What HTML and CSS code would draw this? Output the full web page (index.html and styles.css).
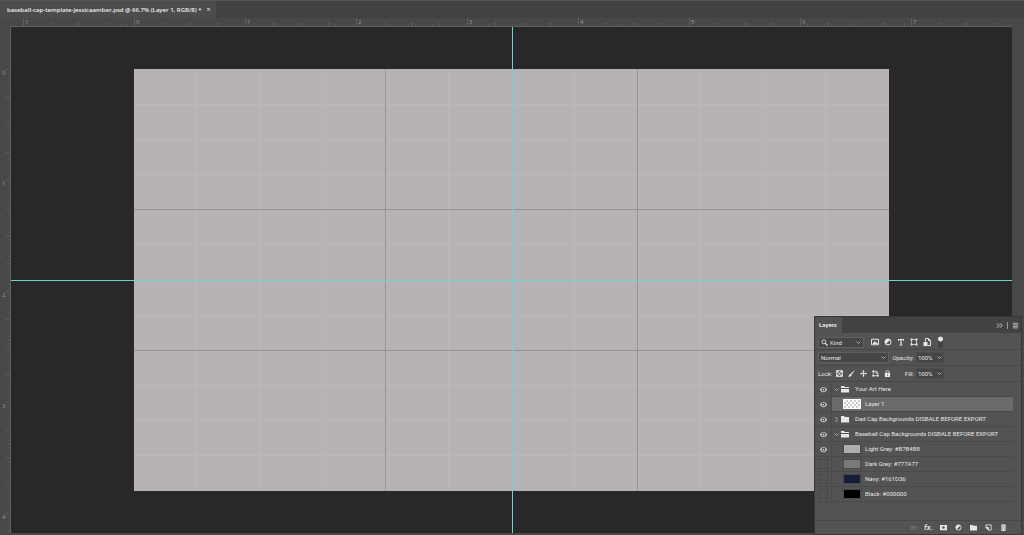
FILE: index.html
```html
<!DOCTYPE html>
<html lang="en">
    <head>
        <meta charset="UTF-8">
        <meta name="viewport" content="width=device-width, initial-scale=1.0">
        <title>baseball-cap-template-jessicaamber.psd</title>
        <link rel="stylesheet" href="styles.css">
    </head>
    <body>
        <!-- icons -->
        <svg class="sprite" aria-hidden="true">
            <symbol id="chevron" viewBox="0 0 10 10"><path d="M1 3l4 4 4-4" fill="none" stroke="currentColor" stroke-width="2"/></symbol>
            <symbol id="chevron-right" viewBox="0 0 10 10"><path d="M3 0l4 5-4 5" fill="none" stroke="currentColor" stroke-width="2"/></symbol>
            <symbol id="eye" viewBox="0 0 16 16"><path d="M0 8C4 0 12 0 16 8 12 16 4 16 0 8Z" fill="currentColor"/><circle cx="8" cy="8" r="4.500" fill="#444"/><circle cx="8" cy="8" r="2" fill="currentColor"/></symbol>
            <symbol id="folder" viewBox="0 0 16 16"><path d="M0 2h6l1.500 2H16v11H0z" fill="currentColor"/></symbol>
            <symbol id="folder-open" viewBox="0 0 16 16"><path d="M0 2h6l1.500 2H16v2H0zM0 8h16v7H0z" fill="currentColor"/></symbol>
            <symbol id="search" viewBox="0 0 16 16"><circle cx="6.500" cy="6.500" r="4.500" fill="none" stroke="currentColor" stroke-width="2"/><path d="m10 10 5 5" stroke="currentColor" stroke-width="3"/></symbol>
            <symbol id="image" viewBox="0 0 16 16"><path d="M1 2.500h14v11H1z" fill="none" stroke="currentColor" stroke-width="2"/><path d="m3 12 4-6 3 3.500 1.500-1.500 2 4z" fill="currentColor"/></symbol>
            <symbol id="adjust" viewBox="0 0 16 16"><circle cx="8" cy="8" r="6" fill="none" stroke="currentColor" stroke-width="2"/><path d="M12.300 3.700A6 6 0 0 0 3.700 12.300Z" fill="currentColor"/></symbol>
            <symbol id="type" viewBox="0 0 16 16"><path d="M2 2h12v4h-1.500L12 4H9.300v9l1.700.500V15H5v-1.500l1.700-.500V4H4l-.500 2H2z" fill="currentColor"/></symbol>
            <symbol id="shape" viewBox="0 0 16 16"><path d="M3 3h10v10H3z" fill="none" stroke="currentColor" stroke-width="1.500"/><path d="M1 1h4v4H1zM11 1h4v4h-4zM1 11h4v4H1zM11 11h4v4h-4z" fill="currentColor"/></symbol>
            <symbol id="smart" viewBox="0 0 16 16"><path d="M5 7V1h6l4 4v10H9" fill="none" stroke="currentColor" stroke-width="2"/><path d="M1 8h8v8H1zM10 1v5h5z" fill="currentColor"/></symbol>
            <symbol id="pixels" viewBox="0 0 16 16"><path d="M1 1h14v14H1z" fill="none" stroke="currentColor" stroke-width="2"/><path d="M2 2h4v4H2zM10 2h4v4h-4zM6 6h4v4H6zM2 10h4v4H2zM10 10h4v4h-4z" fill="currentColor"/></symbol>
            <symbol id="brush" viewBox="0 0 16 16"><path d="M16 0 6.500 7.500 9 10zM6 8.500C3 8.500 4 12 0 14.500c3.500 2 9 .500 8.500-3.500z" fill="currentColor"/></symbol>
            <symbol id="move" viewBox="0 0 16 16"><path d="M8 2v12M2 8h12" stroke="currentColor" stroke-width="2"/><path d="m8 0 3 3.500H5zM8 16l3-3.500H5zM0 8l3.500-3v6zM16 8l-3.500-3v6z" fill="currentColor"/></symbol>
            <symbol id="artboard" viewBox="0 0 16 16"><path d="M3 0v16M0 3h10l5 4M0 13h16M13 8v8" fill="none" stroke="currentColor" stroke-width="2"/><path d="M7 5h5v5z" fill="currentColor"/></symbol>
            <symbol id="lock" viewBox="0 0 16 16"><path d="M4.500 8V5a3.500 3.500 0 0 1 7 0v3" fill="none" stroke="currentColor" stroke-width="2"/><path d="M2 7h12v9H2zm5 3v3h2v-3z" fill="currentColor" fill-rule="evenodd"/></symbol>
            <symbol id="link" viewBox="0 0 16 16"><path d="M7 5H4a3 3 0 0 0 0 6h3M9 5h3a3 3 0 0 1 0 6H9M5 8h6" fill="none" stroke="currentColor" stroke-width="1.500"/></symbol>
            <symbol id="mask" viewBox="0 0 16 16"><path d="M0 2h16v12H0zm8 3a3 3 0 1 0 0 6 3 3 0 0 0 0-6z" fill="currentColor" fill-rule="evenodd"/></symbol>
            <symbol id="new" viewBox="0 0 16 16"><path d="M2 2h12v12H8V8H2z" fill="none" stroke="currentColor" stroke-width="2"/><path d="M1 8h7v7z" fill="currentColor"/></symbol>
            <symbol id="trash" viewBox="0 0 16 16"><path d="M2 3h12M6 2V1h4v1" fill="none" stroke="currentColor" stroke-width="2"/><path d="M3 5h10l-.500 11h-9z" fill="currentColor"/><path d="M6 7v7M10 7v7" stroke="#666"/></symbol>
            <symbol id="collapse" viewBox="0 0 16 16"><path d="m2 3 5 5-5 5M9 3l5 5-5 5" fill="none" stroke="currentColor" stroke-width="2"/></symbol>
            <symbol id="menu" viewBox="0 0 16 16"><path d="M2 3h12M2 6.500h12M2 10h12M2 13.500h12" stroke="currentColor" stroke-width="1.500"/></symbol>
        </svg>

        <header class="tabs">
            <div class="tab">
                <span>baseball-cap-template-jessicaamber.psd @ 66.7% (Layer 1, RGB/8) *</span>
                <button class="close" aria-label="Close">×</button>
            </div>
        </header>

        <main class="workspace">
            <div class="corner"></div>
            <div class="ruler ruler-x">
                <span>1</span><span>0</span><span>1</span><span>2</span><span>3</span><span>4</span><span>5</span><span>6</span><span>7</span>
            </div>
            <div class="corner"></div>
            <div class="ruler ruler-y">
                <span>0</span><span>1</span><span>2</span><span>3</span><span>4</span>
            </div>
            <div class="canvas">
                <svg class="document" aria-label="Document">
                    <g class="minor">
                        <line x1="8.333%" x2="8.333%" y2="100%"/><line x1="16.667%" x2="16.667%" y2="100%"/><line x1="25%" x2="25%" y2="100%"/>
                        <line x1="41.667%" x2="41.667%" y2="100%"/><line x1="58.333%" x2="58.333%" y2="100%"/>
                        <line x1="75%" x2="75%" y2="100%"/><line x1="83.333%" x2="83.333%" y2="100%"/><line x1="91.667%" x2="91.667%" y2="100%"/>
                        <line y1="8.333%" y2="8.333%" x2="100%"/><line y1="16.667%" y2="16.667%" x2="100%"/><line y1="25%" y2="25%" x2="100%"/>
                        <line y1="41.667%" y2="41.667%" x2="100%"/><line y1="58.333%" y2="58.333%" x2="100%"/>
                        <line y1="75%" y2="75%" x2="100%"/><line y1="83.333%" y2="83.333%" x2="100%"/><line y1="91.667%" y2="91.667%" x2="100%"/>
                    </g>
                    <g class="major">
                        <line x1="33.333%" x2="33.333%" y2="100%"/><line x1="66.667%" x2="66.667%" y2="100%"/>
                        <line y1="33.333%" y2="33.333%" x2="100%"/><line y1="66.667%" y2="66.667%" x2="100%"/>
                    </g>
                </svg>
                <div class="guide guide-x"></div>
                <div class="guide guide-y"></div>
            </div>
            <div class="scroll"></div>
        </main>

        <aside class="panel">
            <div class="panel-head">
                <h2>Layers</h2>
                <button class="icon" aria-label="Collapse"><svg><use href="#collapse"/></svg></button>
                <i class="split"></i>
                <button class="icon" aria-label="Panel menu"><svg><use href="#menu"/></svg></button>
            </div>
            <div class="tools">
                <div class="field kind">
                    <svg><use href="#search"/></svg>
                    <select aria-label="Filter"><option>Kind</option></select>
                    <svg class="arrow"><use href="#chevron"/></svg>
                </div>
                <div class="icons filters">
                    <button class="icon" aria-label="Pixel layers"><svg><use href="#image"/></svg></button>
                    <button class="icon" aria-label="Adjustment layers"><svg><use href="#adjust"/></svg></button>
                    <button class="icon" aria-label="Type layers"><svg><use href="#type"/></svg></button>
                    <button class="icon" aria-label="Shape layers"><svg><use href="#shape"/></svg></button>
                    <button class="icon" aria-label="Smart objects"><svg><use href="#smart"/></svg></button>
                    <button class="toggle" aria-label="Toggle filter"></button>
                </div>
            </div>
            <div class="tools">
                <div class="field blend">
                    <select aria-label="Blend mode"><option>Normal</option></select>
                    <svg class="arrow"><use href="#chevron"/></svg>
                </div>
                <label class="end" for="opacity">Opacity:</label>
                <div class="field amount">
                    <input type="text" id="opacity" value="100%">
                    <svg class="arrow"><use href="#chevron"/></svg>
                </div>
            </div>
            <div class="tools">
                <span class="lock-label">Lock:</span>
                <div class="icons locks">
                    <button class="icon" aria-label="Lock transparent pixels"><svg><use href="#pixels"/></svg></button>
                    <button class="icon" aria-label="Lock image pixels"><svg><use href="#brush"/></svg></button>
                    <button class="icon" aria-label="Lock position"><svg><use href="#move"/></svg></button>
                    <button class="icon" aria-label="Lock artboard"><svg><use href="#artboard"/></svg></button>
                    <button class="icon" aria-label="Lock all"><svg><use href="#lock"/></svg></button>
                </div>
                <label class="end" for="fill">Fill:</label>
                <div class="field amount">
                    <input type="text" id="fill" value="100%">
                    <svg class="arrow"><use href="#chevron"/></svg>
                </div>
            </div>
            <ul class="layers">
                <li>
                    <button class="eye" aria-label="Visibility"><svg><use href="#eye"/></svg></button>
                    <div class="layer group"><svg class="arrow"><use href="#chevron"/></svg><svg class="folder"><use href="#folder-open"/></svg><span>Your Art Here</span></div>
                </li>
                <li>
                    <button class="eye" aria-label="Visibility"><svg><use href="#eye"/></svg></button>
                    <div class="layer selected"><i class="thumb checker"></i><span>Layer 1</span></div>
                </li>
                <li>
                    <button class="eye" aria-label="Visibility"><svg><use href="#eye"/></svg></button>
                    <div class="layer group"><svg class="arrow"><use href="#chevron-right"/></svg><svg class="folder"><use href="#folder"/></svg><span>Dad Cap Backgrounds DISBALE BEFORE EXPORT</span></div>
                </li>
                <li>
                    <button class="eye" aria-label="Visibility"><svg><use href="#eye"/></svg></button>
                    <div class="layer group"><svg class="arrow"><use href="#chevron"/></svg><svg class="folder"><use href="#folder-open"/></svg><span>Baseball Cap Backgrounds DISBALE BEFORE EXPORT</span></div>
                </li>
                <li>
                    <button class="eye" aria-label="Visibility"><svg><use href="#eye"/></svg></button>
                    <div class="layer"><i class="thumb light"></i><span>Light Grey: #B7B4B8</span></div>
                </li>
                <li>
                    <button class="eye off" aria-label="Visibility"></button>
                    <div class="layer"><i class="thumb dark"></i><span>Dark Grey: #777A77</span></div>
                </li>
                <li>
                    <button class="eye off" aria-label="Visibility"></button>
                    <div class="layer"><i class="thumb navy"></i><span>Navy: #161D36</span></div>
                </li>
                <li>
                    <button class="eye off" aria-label="Visibility"></button>
                    <div class="layer"><i class="thumb black"></i><span>Black: #000000</span></div>
                </li>
            </ul>
            <div class="panel-foot">
                <button class="icon dim" aria-label="Link layers"><svg><use href="#link"/></svg></button>
                <button class="icon fx">fx.</button>
                <button class="icon" aria-label="Add mask"><svg><use href="#mask"/></svg></button>
                <button class="icon" aria-label="Adjustment layer"><svg><use href="#adjust"/></svg></button>
                <button class="icon" aria-label="New group"><svg><use href="#folder"/></svg></button>
                <button class="icon" aria-label="New layer"><svg><use href="#new"/></svg></button>
                <button class="icon" aria-label="Delete layer"><svg><use href="#trash"/></svg></button>
            </div>
        </aside>
    </body>
</html>
```
FILE: styles.css
```css
*{
    box-sizing: border-box;
}
body{
    margin: 0;
    height: 100vh;
    display: flex;
    flex-direction: column;
    overflow: hidden;
    background-color: #484848;
    color: #e6e6e6;
    font-family: "Open Sans", "Noto Sans", sans-serif;
    font-size: 6px;
    line-height: 10px;
}
button, input, select{
    margin: 0;
    padding: 0;
    border: 0;
    background: none;
    color: inherit;
    font: inherit;
}
svg{
    display: block;
    width: 7px;
    height: 7px;
    flex: none;
}
.sprite{
    position: absolute;
    width: 0;
    height: 0;
}

/* document tab */
.tabs{
    display: flex;
    height: 18px;
    border-top: 1px solid #555;
    background-color: #424242;
}
.tab{
    display: flex;
    align-items: center;
    gap: 5px;
    padding: 0 6px 0 7px;
    background-color: #4c4c4c;
    color: #f0f0f0;
    font-weight: 600;
}
.close{
    font-size: 7px;
    font-weight: 400;
}

/* rulers and canvas */
.workspace{
    flex: 1;
    min-height: 0;
    display: grid;
    grid-template-columns: 11px 1fr 10px;
    grid-template-rows: 9px 1fr;
    padding: 0 2px 2px 0;
}
.ruler{
    display: flex;
    overflow: hidden;
    color: #999;
    font-size: 6px;
    line-height: 8px;
}
.ruler span{
    flex: 0 0 111px;
}
.ruler-x{
    padding-left: 12px;
    border-bottom: 1px solid #606060;
}
.ruler-x span{
    padding-left: 2px;
    background: linear-gradient(90deg, #606060 1px, transparent 1px) 0 100% / 100% 8px no-repeat,
        linear-gradient(90deg, #5c5c5c 1px, transparent 1px) 0 100% / 25% 4px repeat-x,
        linear-gradient(90deg, #565656 1px, transparent 1px) 0 100% / 3.125% 2px repeat-x;
}
.ruler-y{
    flex-direction: column;
    padding-top: 42px;
    border-right: 1px solid #606060;
}
.ruler-y span{
    padding-left: 2px;
    background: linear-gradient(#5c5c5c 1px, transparent 1px) 100% 0 / 4px 25% repeat-y,
        linear-gradient(#565656 1px, transparent 1px) 100% 0 / 2px 3.125% repeat-y;
}
.canvas{
    position: relative;
    display: flex;
    align-items: center;
    justify-content: center;
    background-color: #282828;
}
.document{
    width: 75.4%;
    height: auto;
    aspect-ratio: 755 / 422;
    background-color: #b7b2b6;
    shape-rendering: crispEdges;
}
.minor{
    stroke: #bcb8bb;
}
.major{
    stroke: #969295;
}
.guide{
    position: absolute;
    background-color: #6cd4d4;
}
.guide-x{
    top: 50%;
    left: 0;
    width: 100%;
    height: 1px;
}
.guide-y{
    top: 0;
    left: 50%;
    width: 1px;
    height: 100%;
}

/* layers panel */
.panel{
    position: absolute;
    right: 2px;
    bottom: 0;
    width: 208px;
    border: 1px solid #383838;
    background-color: #535353;
    font-family: Roboto, sans-serif;
}
.panel-head{
    display: flex;
    align-items: center;
    gap: 4px;
    height: 16px;
    padding-right: 2px;
    background-color: #424242;
}
.panel-head h2{
    margin: 0 auto 0 0;
    padding: 0 5px 0 4px;
    background-color: #535353;
    font-size: 6px;
    font-weight: 700;
    line-height: 16px;
}
.split{
    width: 1px;
    height: 7px;
    background-color: #999;
}
.icon{
    display: flex;
    justify-content: center;
    flex: none;
}
.tools{
    display: flex;
    align-items: center;
    height: 16px;
    padding-left: 3px;
    border-bottom: 1px solid #484848;
}
.panel-head + .tools{
    height: 17px;
    padding-top: 2px;
}
.field{
    display: flex;
    align-items: center;
    height: 11px;
    padding: 0 2px;
    border: 1px solid #606060;
    background-color: #464646;
}
.field select, .field input{
    flex: 1;
    min-width: 0;
    height: 9px;
    appearance: none;
}
.arrow{
    width: 5px;
    height: 5px;
    color: #aaa;
}
.kind{
    width: 46px;
    gap: 2px;
}
.blend{
    width: 71px;
}
.amount{
    width: 28px;
    padding: 0 1px;
    border-color: #4c4c4c;
}
.end{
    width: 27px;
    padding-right: 2px;
    text-align: right;
}
.icons{
    display: flex;
    align-items: center;
}
.filters{
    gap: 5px;
    margin-left: 7px;
}
.filters svg{
    width: 8px;
    height: 8px;
}
.toggle{
    width: 5px;
    height: 12px;
    margin-left: 2px;
    border-radius: 3px;
    background: radial-gradient(circle at 50% 3px, #e6e6e6 2px, #424242 3px);
}
.lock-label{
    width: 18px;
}
.locks{
    gap: 5px;
}
.locks + .end{
    width: 25px;
}
.layers{
    margin: 0;
    padding: 0 8px 18px 0;
    list-style: none;
}
.layers li{
    display: flex;
    height: 15px;
    border-bottom: 1px solid #4a4a4a;
}
.eye{
    display: flex;
    align-items: center;
    justify-content: center;
    width: 17px;
    border-right: 1px solid #4a4a4a;
}
.off::before{
    content: "";
    width: 7px;
    height: 8px;
    border: 1px solid #484848;
}
.layer{
    flex: 1;
    display: flex;
    align-items: center;
    gap: 4px;
    padding-left: 11px;
    white-space: nowrap;
}
.group{
    gap: 2px;
    padding-left: 2px;
}
.folder{
    width: 8px;
    height: 8px;
    margin-right: 4px;
}
.selected{
    background-color: #6a6a6a;
}
.thumb{
    width: 18px;
    height: 10px;
    border: 1px solid #484848;
}
.checker{
    border-color: #fff;
    background: repeating-conic-gradient(#ccc 0 25%, #fff 0 50%) 0 0 / 4px 4px;
}
.light{
    background-color: #aeaeae;
}
.dark{
    background-color: #777a77;
}
.navy{
    background-color: #161d36;
}
.black{
    background-color: #000;
}
.panel-foot{
    display: flex;
    align-items: center;
    justify-content: flex-end;
    gap: 8px;
    height: 14px;
    padding-right: 14px;
    border-top: 1px solid #484848;
}
.dim{
    color: #888;
}
.fx{
    width: 7px;
    font-size: 8px;
    font-style: italic;
    font-weight: 500;
}
```
